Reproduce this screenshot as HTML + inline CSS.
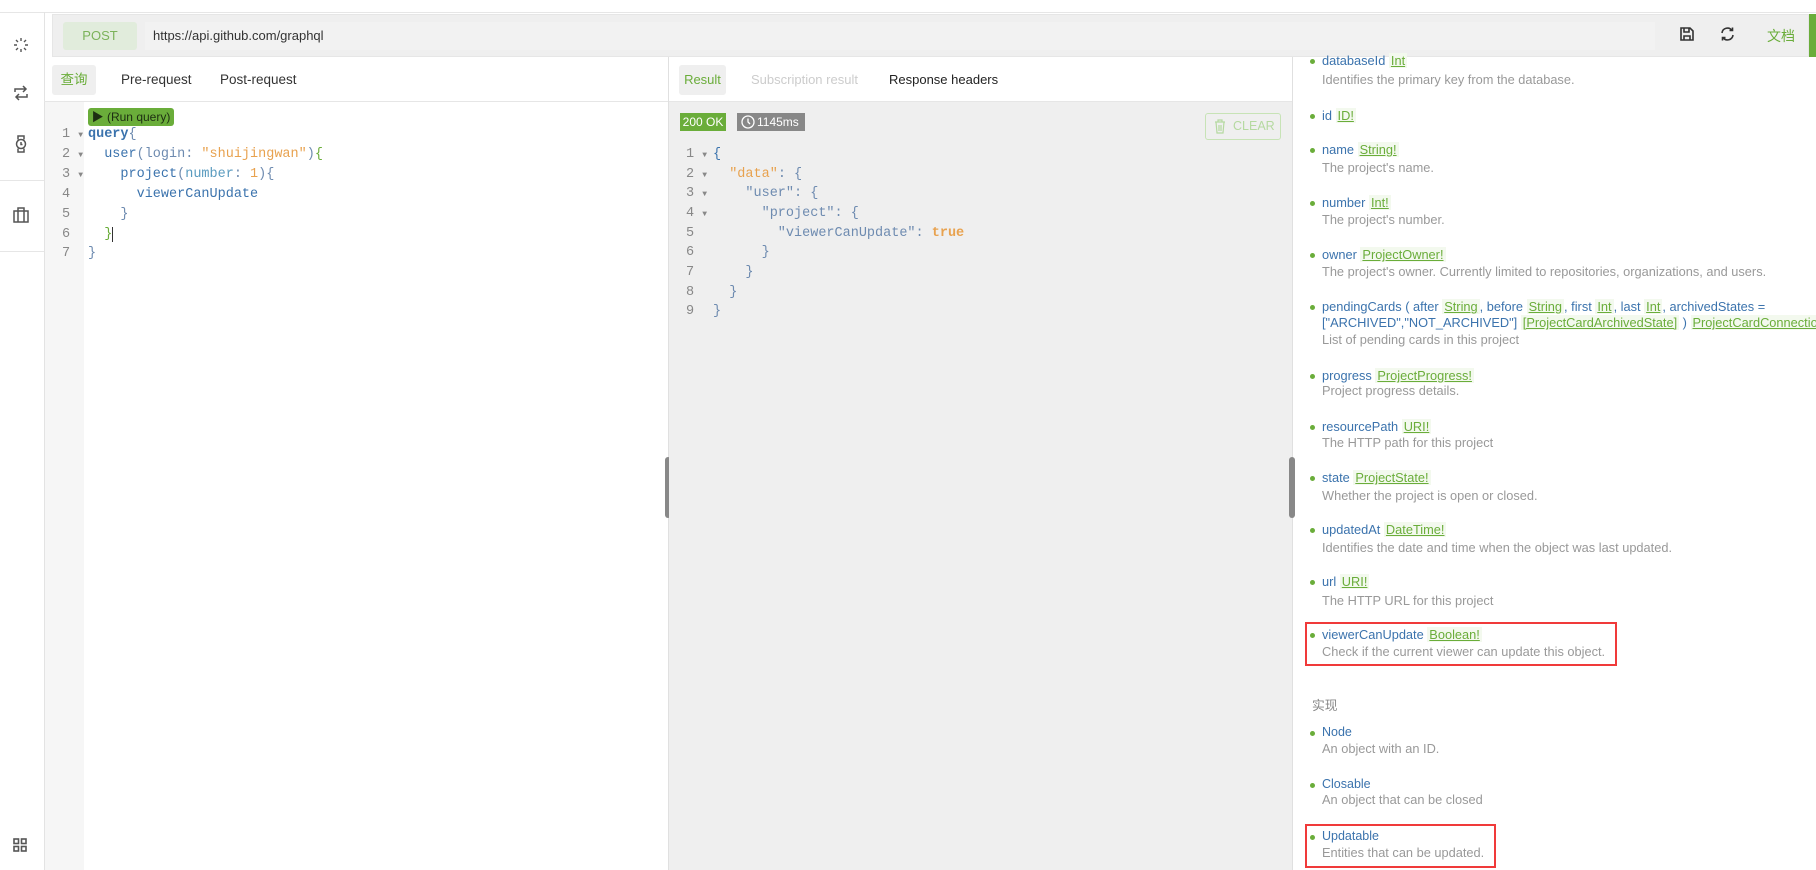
<!DOCTYPE html>
<html><head><meta charset="utf-8"><style>
*{box-sizing:border-box;margin:0;padding:0}
body{width:1816px;height:870px;overflow:hidden;background:#fff;font-family:"Liberation Sans","Noto Sans CJK SC",sans-serif;position:relative;color:#333}
.a{position:absolute}
.mono{font-family:"Liberation Mono","DejaVu Sans Mono",monospace;font-size:13.5px;white-space:pre}
.ln{position:absolute;height:20px;line-height:20px}
.d{position:absolute;left:1322px;font-size:12.8px;line-height:18px;white-space:nowrap}
.n{color:#3b73ad}
.g{color:#999}
.t{color:#6aad3a;text-decoration:underline;background:#f3f9ee;padding:0 2px}
.b{position:absolute;left:1310px;width:5px;height:5px;border-radius:50%;background:#6aad3a}
.k{color:#3b73ad}.s{color:#e8a24f}.p{color:#6e8bb0}
</style></head><body>
<div class="a" style="left:0;top:12px;width:1816px;height:1px;background:#e6e6e6"></div>
<div class="a" style="left:44px;top:12px;width:1px;height:858px;background:#e3e3e3"></div>
<div class="a" style="left:0;top:180px;width:44px;height:1px;background:#e6e6e6"></div>
<div class="a" style="left:0;top:251px;width:44px;height:1px;background:#e6e6e6"></div>
<svg class="a" style="left:12px;top:36px" width="18" height="18" viewBox="0 0 18 18" stroke="#555" stroke-width="1.4" fill="none"><path d="M9 2v3M9 13v3M2 9h3M13 9h3M4 4l2 2M12 12l2 2M4 14l2-2M12 6l2-2"/></svg>
<svg class="a" style="left:12px;top:84px" width="18" height="18" viewBox="0 0 18 18" stroke="#555" stroke-width="1.5" fill="none"><path d="M3 8V5h11M11 2l3 3-3 3M15 10v3H4M7 16l-3-3 3-3"/></svg>
<svg class="a" style="left:12px;top:134px" width="18" height="20" viewBox="0 0 18 20" stroke="#555" stroke-width="1.5" fill="none"><circle cx="9" cy="10" r="4.5"/><path d="M6 5.5V2h6v3.5M6 14.5V18h6v-3.5M9 8v2.5h1.5"/></svg>
<svg class="a" style="left:12px;top:206px" width="18" height="18" viewBox="0 0 18 18" stroke="#555" stroke-width="1.5" fill="none"><rect x="2" y="5" width="14" height="11"/><path d="M6 5V2h6v3M6 5v11M12 5v11"/></svg>
<svg class="a" style="left:13px;top:838px" width="14" height="14" viewBox="0 0 14 14" stroke="#555" stroke-width="1.6" fill="none"><rect x="1" y="1" width="4.5" height="4.5"/><rect x="8.5" y="1" width="4.5" height="4.5"/><rect x="1" y="8.5" width="4.5" height="4.5"/><rect x="8.5" y="8.5" width="4.5" height="4.5"/></svg>
<div class="a" style="left:52px;top:14px;width:1757px;height:43px;background:#efefef;border:1px solid #e6e6e6"></div>
<div class="a" style="left:1809px;top:14px;width:7px;height:43px;background:#6aad3a"></div>
<div class="a" style="left:63px;top:22px;width:74px;height:28px;background:#e1ecdc;border-radius:3px;color:#7bb25a;font-size:13px;line-height:28px;text-align:center">POST</div>
<div class="a" style="left:145px;top:22px;width:1510px;height:28px;background:#f2f2f2"></div>
<div class="a" style="left:153px;top:22px;font-size:13px;line-height:28px;color:#333">https://api.github.com/graphql</div>
<svg class="a" style="left:1679px;top:26px" width="16" height="16" viewBox="0 0 16 16" stroke="#333" stroke-width="1.6" fill="none"><path d="M2 2h9l3 3v9H2z M5 2v4h5V2 M5 14v-4h6v4"/></svg>
<svg class="a" style="left:1719px;top:26px" width="17" height="16" viewBox="0 0 17 16" stroke="#333" stroke-width="1.6" fill="none"><path d="M3 7a5.5 5.5 0 0 1 10-2.5M14 9a5.5 5.5 0 0 1-10 2.5M13.5 1.5v3h-3M3.5 14.5v-3h3"/></svg>
<div class="a" style="left:1767px;top:22px;font-size:14px;line-height:28px;color:#6aad3a">文档</div>
<div class="a" style="left:52px;top:65px;width:44px;height:30px;background:#efefef;border-radius:3px;color:#6aad3a;font-size:13.5px;line-height:30px;text-align:center">查询</div>
<div class="a" style="left:121px;top:65px;font-size:13.5px;line-height:30px">Pre-request</div>
<div class="a" style="left:220px;top:65px;font-size:13.5px;line-height:30px">Post-request</div>
<div class="a" style="left:44px;top:101px;width:1249px;height:1px;background:#e6e6e6"></div>
<div class="a" style="left:45px;top:102px;width:39px;height:768px;background:#f6f6f6"></div>
<div class="a" style="left:88px;top:108px;width:86px;height:18px;background:#6aad3a;border-radius:3px;color:#1d2e12;font-size:12px;line-height:18px;text-align:center">▶ (Run query)</div>
<div class="mono">
<div class="ln" style="left:62px;top:125px;color:#888">1 <span style="font-size:8px">▼</span></div>
<div class="ln" style="left:62px;top:145px;color:#888">2 <span style="font-size:8px">▼</span></div>
<div class="ln" style="left:62px;top:165px;color:#888">3 <span style="font-size:8px">▼</span></div>
<div class="ln" style="left:62px;top:185px;color:#888">4</div>
<div class="ln" style="left:62px;top:205px;color:#888">5</div>
<div class="ln" style="left:62px;top:225px;color:#888">6</div>
<div class="ln" style="left:62px;top:244px;color:#888">7</div>
<div class="ln" style="left:88px;top:125px"><span class="k" style="font-weight:bold">query</span><span class="p">{</span></div>
<div class="ln" style="left:88px;top:145px"><span class="k">  user</span><span class="p">(login: </span><span class="s">"shuijingwan"</span><span class="p">)</span><span style="color:#6aad3a">{</span></div>
<div class="ln" style="left:88px;top:165px"><span class="k">    project</span><span class="p">(</span><span style="color:#5a9bbf">number</span><span class="p">: </span><span class="s">1</span><span class="p">){</span></div>
<div class="ln" style="left:88px;top:185px"><span class="k">      viewerCanUpdate</span></div>
<div class="ln" style="left:88px;top:205px"><span class="p">    }</span></div>
<div class="ln" style="left:88px;top:225px"><span style="color:#6aad3a">  }</span><span style="border-left:1px solid #333"></span></div>
<div class="ln" style="left:88px;top:244px"><span class="p">}</span></div>
</div>
<div class="a" style="left:668px;top:57px;width:1px;height:813px;background:#e0e0e0"></div>
<div class="a" style="left:665px;top:457px;width:6px;height:61px;background:#888;border-radius:3px"></div>
<div class="a" style="left:679px;top:65px;width:47px;height:30px;background:#efefef;border-radius:3px;color:#6aad3a;font-size:13px;line-height:30px;text-align:center">Result</div>
<div class="a" style="left:751px;top:65px;font-size:13px;line-height:30px;color:#ccc">Subscription result</div>
<div class="a" style="left:889px;top:65px;font-size:13px;line-height:30px;color:#222">Response headers</div>
<div class="a" style="left:669px;top:102px;width:623px;height:768px;background:#efefef"></div>
<div class="a" style="left:680px;top:113px;width:46px;height:18px;background:#6aad3a;color:#fff;font-size:12px;line-height:18px;text-align:center">200 OK</div>
<div class="a" style="left:737px;top:113px;width:68px;height:18px;background:#888;color:#fff;font-size:12px;line-height:18px;padding-left:20px">1145ms</div>
<svg class="a" style="left:741px;top:115px" width="14" height="14" viewBox="0 0 14 14" stroke="#fff" stroke-width="1.3" fill="none"><circle cx="7" cy="7" r="6"/><path d="M7 3.5V7l2 2"/></svg>
<div class="a" style="left:1205px;top:113px;width:76px;height:27px;border:1px solid #c7e3b6;border-radius:3px;color:#b5d9a0;font-size:12.5px;line-height:25px;padding-left:27px">CLEAR</div>
<svg class="a" style="left:1214px;top:119px" width="12" height="15" viewBox="0 0 12 15" stroke="#b5d9a0" stroke-width="1.2" fill="none"><path d="M1 3h10M4 3V1h4v2M2 3l1 11h6l1-11M5 6v6M7 6v6"/></svg>
<div class="mono">
<div class="ln" style="left:686px;top:145px;color:#888">1 <span style="font-size:8px">▼</span></div>
<div class="ln" style="left:686px;top:165px;color:#888">2 <span style="font-size:8px">▼</span></div>
<div class="ln" style="left:686px;top:184px;color:#888">3 <span style="font-size:8px">▼</span></div>
<div class="ln" style="left:686px;top:204px;color:#888">4 <span style="font-size:8px">▼</span></div>
<div class="ln" style="left:686px;top:224px;color:#888">5</div>
<div class="ln" style="left:686px;top:243px;color:#888">6</div>
<div class="ln" style="left:686px;top:263px;color:#888">7</div>
<div class="ln" style="left:686px;top:283px;color:#888">8</div>
<div class="ln" style="left:686px;top:302px;color:#888">9</div>
<div class="ln" style="left:713px;top:145px"><span class="k">{</span></div>
<div class="ln" style="left:713px;top:165px"><span class="s">  "data"</span><span class="p">: {</span></div>
<div class="ln" style="left:713px;top:184px"><span class="p">    "user": {</span></div>
<div class="ln" style="left:713px;top:204px"><span class="p">      "project": {</span></div>
<div class="ln" style="left:713px;top:224px"><span class="p">        "viewerCanUpdate": </span><span class="s" style="font-weight:bold">true</span></div>
<div class="ln" style="left:713px;top:243px"><span class="p">      }</span></div>
<div class="ln" style="left:713px;top:263px"><span class="p">    }</span></div>
<div class="ln" style="left:713px;top:283px"><span class="p">  }</span></div>
<div class="ln" style="left:713px;top:302px"><span class="p">}</span></div>
</div>
<div class="a" style="left:1292px;top:57px;width:1px;height:813px;background:#e0e0e0"></div>
<div class="a" style="left:1289px;top:457px;width:6px;height:61px;background:#888;border-radius:3px"></div>
<div class="b" style="top:59px"></div><div class="d" style="top:52px"><span class="n">databaseId</span> <span class="t">Int</span></div>
<div class="d g" style="top:71px">Identifies the primary key from the database.</div>
<div class="b" style="top:114px"></div><div class="d" style="top:107px"><span class="n">id</span> <span class="t">ID!</span></div>
<div class="b" style="top:148px"></div><div class="d" style="top:141px"><span class="n">name</span> <span class="t">String!</span></div>
<div class="d g" style="top:159px">The project's name.</div>
<div class="b" style="top:201px"></div><div class="d" style="top:194px"><span class="n">number</span> <span class="t">Int!</span></div>
<div class="d g" style="top:211px">The project's number.</div>
<div class="b" style="top:253px"></div><div class="d" style="top:246px"><span class="n">owner</span> <span class="t">ProjectOwner!</span></div>
<div class="d g" style="top:263px">The project's owner. Currently limited to repositories, organizations, and users.</div>
<div class="b" style="top:305px"></div><div class="d n" style="top:298px">pendingCards ( after <span class="t">String</span>, before <span class="t">String</span>, first <span class="t">Int</span>, last <span class="t">Int</span>, archivedStates =</div>
<div class="d n" style="top:314px">["ARCHIVED","NOT_ARCHIVED"] <span class="t">[ProjectCardArchivedState]</span> ) <span class="t">ProjectCardConnection!</span></div>
<div class="d g" style="top:331px">List of pending cards in this project</div>
<div class="b" style="top:374px"></div><div class="d" style="top:367px"><span class="n">progress</span> <span class="t">ProjectProgress!</span></div>
<div class="d g" style="top:382px">Project progress details.</div>
<div class="b" style="top:425px"></div><div class="d" style="top:418px"><span class="n">resourcePath</span> <span class="t">URI!</span></div>
<div class="d g" style="top:434px">The HTTP path for this project</div>
<div class="b" style="top:476px"></div><div class="d" style="top:469px"><span class="n">state</span> <span class="t">ProjectState!</span></div>
<div class="d g" style="top:487px">Whether the project is open or closed.</div>
<div class="b" style="top:528px"></div><div class="d" style="top:521px"><span class="n">updatedAt</span> <span class="t">DateTime!</span></div>
<div class="d g" style="top:539px">Identifies the date and time when the object was last updated.</div>
<div class="b" style="top:580px"></div><div class="d" style="top:573px"><span class="n">url</span> <span class="t">URI!</span></div>
<div class="d g" style="top:592px">The HTTP URL for this project</div>
<div class="b" style="top:633px"></div><div class="d" style="top:626px"><span class="n">viewerCanUpdate</span> <span class="t">Boolean!</span></div>
<div class="d g" style="top:643px">Check if the current viewer can update this object.</div>
<div class="a" style="left:1305px;top:622px;width:312px;height:44px;border:2px solid #f03a3a"></div>
<div class="d g" style="top:697px;left:1312px;color:#888">实现</div>
<div class="b" style="top:731px"></div><div class="d n" style="top:723px;font-size:12.5px">Node</div>
<div class="d g" style="top:740px">An object with an ID.</div>
<div class="b" style="top:783px"></div><div class="d n" style="top:775px;font-size:12.5px">Closable</div>
<div class="d g" style="top:791px">An object that can be closed</div>
<div class="b" style="top:835px"></div><div class="d n" style="top:827px;font-size:12.5px">Updatable</div>
<div class="d g" style="top:844px">Entities that can be updated.</div>
<div class="a" style="left:1305px;top:824px;width:191px;height:44px;border:2px solid #f03a3a"></div>
</body></html>
